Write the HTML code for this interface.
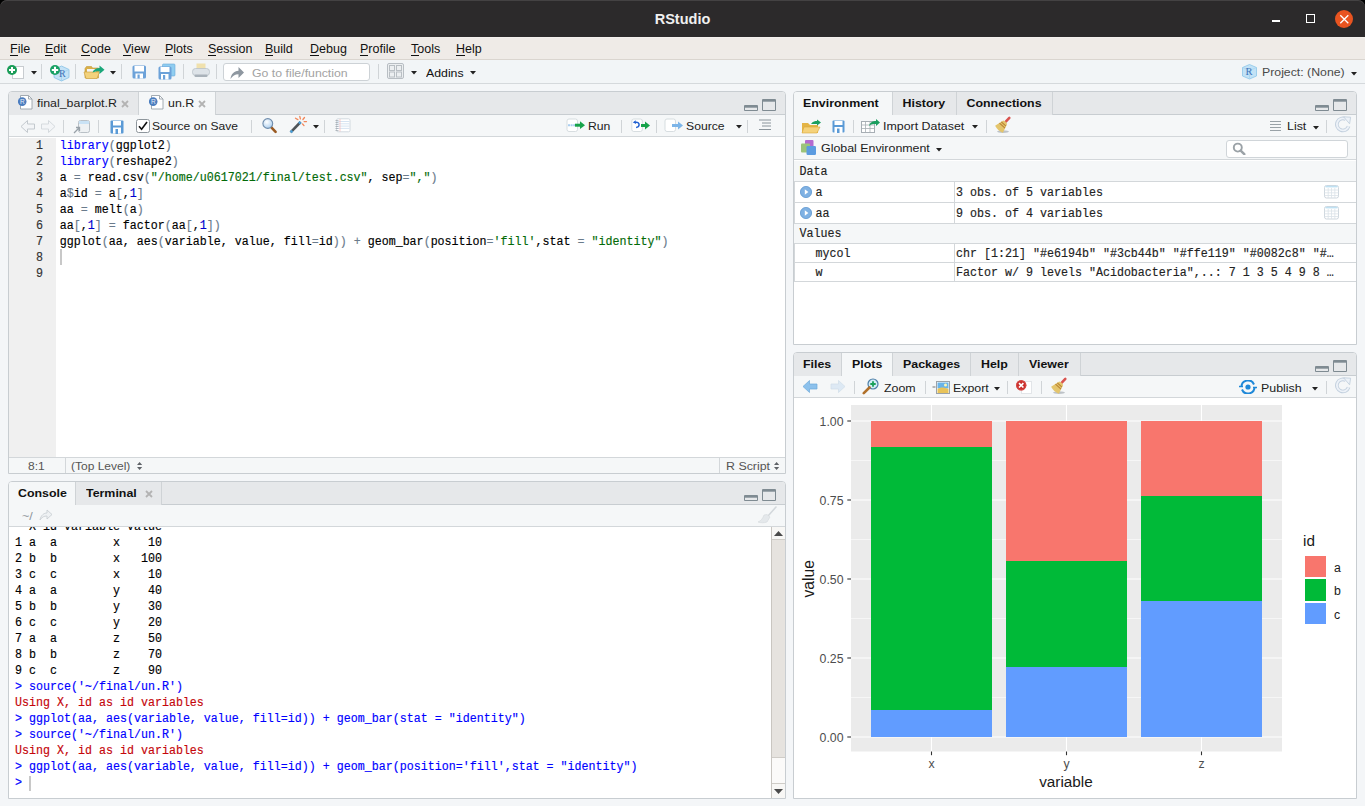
<!DOCTYPE html>
<html><head><meta charset="utf-8">
<style>
*{box-sizing:border-box;margin:0;padding:0}
html,body{width:1365px;height:806px;overflow:hidden;background:#f4f6f8}
body{font-family:"Liberation Sans",sans-serif;font-size:12px;color:#222;position:relative}
.a{position:absolute}
.t{white-space:pre;line-height:1}
.m{-webkit-text-stroke:0.15px currentColor;transform:scale(1,1.16);transform-origin:0 8.94px}
</style></head><body>
<div class="a" style="left:0px;top:0px;width:1365px;height:12px;background:#000;"></div>
<div class="a" style="left:0px;top:0px;width:1365px;height:37px;background:#2c2a2b;border-radius:7px 7px 0 0;box-shadow:inset 0 1px 0 #444243;"></div>
<div class="a t" style="left:0px;top:11.73px;font-family:'Liberation Sans',sans-serif;font-size:14.5px;color:#f0f0f0;font-weight:bold;width:1365px;text-align:center;">RStudio</div>
<div class="a" style="left:1272px;top:20px;width:8px;height:2px;background:#ffffff;"></div>
<div class="a" style="left:1306px;top:14px;width:9px;height:9px;border:1.5px solid #fff;"></div>
<div class="a" style="left:1334.6px;top:9.6px;width:18.6px;height:18.6px;background:#e95420;border-radius:50%;"></div>
<svg class="a" style="left:1334.6px;top:9.6px" width="19" height="19" viewBox="0 0 19 19"><path d="M5.3 5.3L13.3 13.3M13.3 5.3L5.3 13.3" stroke="#fff" stroke-width="1.3"/></svg>
<div class="a" style="left:0px;top:37px;width:1365px;height:23px;background:#efebe7;border-bottom:1px solid #dad5cf;"></div>
<div class="a" style="left:0px;top:37px;width:1365px;height:1px;background:#f3f0ed;"></div>
<div class="a t" style="left:10px;top:42.92px;font-family:'Liberation Sans',sans-serif;font-size:12.5px;color:#111;font-weight:normal;">File</div>
<div class="a" style="left:10px;top:55px;width:8px;height:1px;background:#111;"></div>
<div class="a t" style="left:45px;top:42.92px;font-family:'Liberation Sans',sans-serif;font-size:12.5px;color:#111;font-weight:normal;">Edit</div>
<div class="a" style="left:45px;top:55px;width:8px;height:1px;background:#111;"></div>
<div class="a t" style="left:81px;top:42.92px;font-family:'Liberation Sans',sans-serif;font-size:12.5px;color:#111;font-weight:normal;">Code</div>
<div class="a" style="left:81px;top:55px;width:9px;height:1px;background:#111;"></div>
<div class="a t" style="left:123px;top:42.92px;font-family:'Liberation Sans',sans-serif;font-size:12.5px;color:#111;font-weight:normal;">View</div>
<div class="a" style="left:123px;top:55px;width:8px;height:1px;background:#111;"></div>
<div class="a t" style="left:165px;top:42.92px;font-family:'Liberation Sans',sans-serif;font-size:12.5px;color:#111;font-weight:normal;">Plots</div>
<div class="a" style="left:165px;top:55px;width:8px;height:1px;background:#111;"></div>
<div class="a t" style="left:208px;top:42.92px;font-family:'Liberation Sans',sans-serif;font-size:12.5px;color:#111;font-weight:normal;">Session</div>
<div class="a" style="left:208px;top:55px;width:8px;height:1px;background:#111;"></div>
<div class="a t" style="left:265px;top:42.92px;font-family:'Liberation Sans',sans-serif;font-size:12.5px;color:#111;font-weight:normal;">Build</div>
<div class="a" style="left:265px;top:55px;width:8px;height:1px;background:#111;"></div>
<div class="a t" style="left:310px;top:42.92px;font-family:'Liberation Sans',sans-serif;font-size:12.5px;color:#111;font-weight:normal;">Debug</div>
<div class="a" style="left:310px;top:55px;width:9px;height:1px;background:#111;"></div>
<div class="a t" style="left:360px;top:42.92px;font-family:'Liberation Sans',sans-serif;font-size:12.5px;color:#111;font-weight:normal;">Profile</div>
<div class="a" style="left:360px;top:55px;width:8px;height:1px;background:#111;"></div>
<div class="a t" style="left:411px;top:42.92px;font-family:'Liberation Sans',sans-serif;font-size:12.5px;color:#111;font-weight:normal;">Tools</div>
<div class="a" style="left:411px;top:55px;width:8px;height:1px;background:#111;"></div>
<div class="a t" style="left:456px;top:42.92px;font-family:'Liberation Sans',sans-serif;font-size:12.5px;color:#111;font-weight:normal;">Help</div>
<div class="a" style="left:456px;top:55px;width:9px;height:1px;background:#111;"></div>
<div class="a" style="left:0px;top:60px;width:1365px;height:24px;background:#f2f5f7;border-bottom:1px solid #d5d9dc;"></div>
<svg class="a" style="left:6px;top:63px" width="24" height="17" viewBox="0 0 24 17"><rect x="6.5" y="3.5" width="11" height="12" fill="#fff" stroke="#c8ccd0"/><circle cx="6" cy="7" r="5" fill="#1a9d58"/><path d="M6 4v6M3 7h6" stroke="#fff" stroke-width="2"/></svg>
<svg class="a" style="left:31px;top:71px" width="6" height="4" viewBox="0 0 6 4"><path d="M0 0h6L3 3.5z" fill="#222"/></svg>
<div class="a" style="left:41px;top:64px;width:1px;height:15px;background:#d0d4d7;"></div>
<svg class="a" style="left:49px;top:63px" width="22" height="19" viewBox="0 0 22 19"><path d="M12.5 3l7.5 3.5v8L12.5 18 5 14.5v-8z" fill="#c4e2f6" stroke="#86c1e6" stroke-width="0.8"/><path d="M5 6.5l7.5 3.5 7.5-3.5M12.5 10v8" fill="none" stroke="#9fd0ee" stroke-width="0.7"/><text x="10" y="14" font-family="Liberation Serif" font-size="10" fill="#3f74b8">R</text><circle cx="6" cy="7" r="5" fill="#17a063"/><path d="M6 3.8v6.4M2.8 7h6.4" stroke="#fff" stroke-width="2.1"/></svg>
<div class="a" style="left:75px;top:64px;width:1px;height:15px;background:#d0d4d7;"></div>
<svg class="a" style="left:83px;top:63px" width="23" height="17" viewBox="0 0 23 17"><path d="M2 5.5l1.5-2h5l1 1.5h6v10H2z" fill="#d9b04a" stroke="#c39a35" stroke-width="0.6"/><path d="M4 6h9v6H4z" fill="#f4f4f4"/><path d="M1 9h15.5l-2.5 6.5H3z" fill="#f3d27c" stroke="#cfa443" stroke-width="0.7"/><path d="M9.5 9.5c1-3 3.5-4.5 7-4.5V2.5l5 4.2-5 4.2V8.3c-2.5 0-5 0.3-7 1.2z" fill="#1aa77a"/></svg>
<svg class="a" style="left:110px;top:71px" width="6" height="4" viewBox="0 0 6 4"><path d="M0 0h6L3 3.5z" fill="#222"/></svg>
<div class="a" style="left:121px;top:64px;width:1px;height:15px;background:#d0d4d7;"></div>
<svg class="a" style="left:132px;top:65px" width="15" height="14" viewBox="0 0 15 14"><rect x="0.5" y="0.5" width="13.5" height="13" rx="1.5" fill="#6ca2d9"/><rect x="2.5" y="1" width="9.5" height="5.5" fill="#fff"/><rect x="3.5" y="8.5" width="7.5" height="5" fill="#fff"/><rect x="5.5" y="9.5" width="2.2" height="4" fill="#6ca2d9"/></svg>
<svg class="a" style="left:158px;top:63px" width="18" height="17" viewBox="0 0 18 17"><rect x="4.5" y="1" width="12.5" height="12" rx="1" fill="#8fcdf0" stroke="#6aa8d8" stroke-width="0.6"/><rect x="0.5" y="3.5" width="13" height="13" rx="1.5" fill="#6ca2d9"/><rect x="2.5" y="4" width="9" height="5" fill="#fff"/><rect x="3" y="11" width="7.5" height="5.5" fill="#fff"/><rect x="5" y="12" width="2.2" height="4.5" fill="#6ca2d9"/></svg>
<div class="a" style="left:183px;top:64px;width:1px;height:15px;background:#d0d4d7;"></div>
<svg class="a" style="left:192px;top:63px" width="18" height="15" viewBox="0 0 18 15"><rect x="4.5" y="0.5" width="9" height="7" fill="#f0e1ad"/><rect x="0.5" y="5.5" width="17" height="7" rx="3" fill="#dde3e8" stroke="#b9c1c8" stroke-width="0.8"/><rect x="2.5" y="11.5" width="13" height="2.5" rx="1" fill="#a9b2ba"/></svg>
<div class="a" style="left:216px;top:64px;width:1px;height:15px;background:#d0d4d7;"></div>
<div class="a" style="left:223px;top:63px;width:147px;height:18px;background:#fff;border:1px solid #cdd2d6;border-radius:3px;"></div>
<svg class="a" style="left:229px;top:65px" width="16" height="15" viewBox="0 0 16 15"><path d="M1.5 14c0.5-5 3.5-8 8-8.3V2l5.5 5.5-5.5 5.5V9.2c-3.5 0-6 1.5-8 4.8z" fill="#8e97a0"/></svg>
<div class="a t" style="left:252px;top:67.09px;font-family:'Liberation Sans',sans-serif;font-size:12.3px;color:#a3a3a3;font-weight:normal;transform:scale(1,0.91);transform-origin:0 10.41px;">Go to file/function</div>
<div class="a" style="left:378px;top:64px;width:1px;height:15px;background:#d0d4d7;"></div>
<svg class="a" style="left:387px;top:63px" width="17" height="16" viewBox="0 0 17 16"><rect x="0.5" y="0.5" width="16" height="15" rx="1.5" fill="#eceff1" stroke="#b8bec3"/><rect x="2.5" y="2.5" width="5" height="5" fill="none" stroke="#b8bec3"/><rect x="9.5" y="2.5" width="5" height="5" fill="none" stroke="#b8bec3"/><rect x="2.5" y="9" width="5" height="5" fill="none" stroke="#b8bec3"/><rect x="9.5" y="9" width="5" height="5" fill="none" stroke="#b8bec3"/></svg>
<svg class="a" style="left:411px;top:71px" width="6" height="4" viewBox="0 0 6 4"><path d="M0 0h6L3 3.5z" fill="#222"/></svg>
<div class="a t" style="left:426px;top:66.59px;font-family:'Liberation Sans',sans-serif;font-size:12.3px;color:#111;font-weight:normal;transform:scale(1,0.91);transform-origin:0 10.41px;">Addins</div>
<svg class="a" style="left:470px;top:71px" width="6" height="4" viewBox="0 0 6 4"><path d="M0 0h6L3 3.5z" fill="#222"/></svg>
<svg class="a" style="left:1241px;top:63px" width="17" height="17" viewBox="0 0 17 17"><path d="M8.5 1.5l7 3v8.5l-7 3-7-3V4.5z" fill="#c2e2f6" stroke="#8cc6ea" stroke-width="0.8"/><path d="M1.5 4.5l7 3 7-3M8.5 7.5v8.5" fill="none" stroke="#a5d3ef" stroke-width="0.7"/><text x="4.6" y="11.8" font-family="Liberation Serif" font-size="10.5" fill="#3f74b8">R</text></svg>
<div class="a t" style="left:1262px;top:66.09px;font-family:'Liberation Sans',sans-serif;font-size:12.3px;color:#4a4a4a;font-weight:normal;transform:scale(1,0.91);transform-origin:0 10.41px;">Project: (None)</div>
<svg class="a" style="left:1351px;top:71.5px" width="6" height="4" viewBox="0 0 6 4"><path d="M0 0h6L3 3.5z" fill="#222"/></svg>
<div class="a" style="left:8px;top:91px;width:778px;height:383px;background:#ffffff;border:1px solid #c8cdd1;border-radius:4px 4px 0 0;"></div>
<div class="a" style="left:9px;top:92px;width:776px;height:23px;background:#e6e8ea;border-bottom:1px solid #c8cdd1;border-radius:3px 3px 0 0;"></div>
<div class="a" style="left:9px;top:92px;width:130px;height:23px;background:#e6e8ea;border-right:1px solid #cfd3d6;border-radius:3px 0 0 0;"></div>
<div class="a t" style="left:37px;top:97.0px;font-family:'Liberation Sans',sans-serif;font-size:12.4px;color:#222;font-weight:normal;transform:scale(1,0.91);transform-origin:0 10.50px;">final_barplot.R</div>
<svg class="a" style="left:121px;top:100px" width="8" height="8" viewBox="0 0 8 8"><path d="M1 1L7 7M7 1L1 7" stroke="#b3b3b3" stroke-width="1.8"/></svg>
<svg class="a" style="left:18px;top:94px" width="16" height="16" viewBox="0 0 16 16"><path d="M2.5 1.5h8l3.5 3.5v10h-11.5z" fill="#fff" stroke="#9aa3aa" stroke-width="0.9"/><path d="M10.5 1.5v3.5h3.5" fill="none" stroke="#9aa3aa" stroke-width="0.9"/><circle cx="4.2" cy="7.6" r="4.3" fill="#4b7dbf"/><text x="2" y="10.3" font-family="Liberation Sans" font-size="6.5" fill="#e8eef6">R</text></svg>
<div class="a" style="left:139px;top:92px;width:77px;height:24px;background:#f5f7f8;border-right:1px solid #cfd3d6;"></div>
<div class="a t" style="left:168px;top:97.0px;font-family:'Liberation Sans',sans-serif;font-size:12.4px;color:#222;font-weight:normal;transform:scale(1,0.91);transform-origin:0 10.50px;">un.R</div>
<svg class="a" style="left:198px;top:100px" width="8" height="8" viewBox="0 0 8 8"><path d="M1 1L7 7M7 1L1 7" stroke="#b3b3b3" stroke-width="1.8"/></svg>
<svg class="a" style="left:149px;top:94px" width="16" height="16" viewBox="0 0 16 16"><path d="M2.5 1.5h8l3.5 3.5v10h-11.5z" fill="#fff" stroke="#9aa3aa" stroke-width="0.9"/><path d="M10.5 1.5v3.5h3.5" fill="none" stroke="#9aa3aa" stroke-width="0.9"/><circle cx="4.2" cy="7.6" r="4.3" fill="#4b7dbf"/><text x="2" y="10.3" font-family="Liberation Sans" font-size="6.5" fill="#e8eef6">R</text></svg>
<svg class="a" style="left:744px;top:99px" width="32" height="12" viewBox="0 0 32 12"><rect x="0" y="6" width="14" height="6" rx="1" fill="#7f8b92"/><rect x="1" y="8.7" width="12" height="2.3" fill="#e6e8ea"/><rect x="18" y="0" width="14" height="12" rx="1" fill="#7f8b92"/><rect x="19" y="2.7" width="12" height="8.3" fill="#e6e8ea"/></svg>
<div class="a" style="left:9px;top:115px;width:776px;height:22px;background:#f5f7f8;border-bottom:1px solid #d3d7da;"></div>
<svg class="a" style="left:20px;top:119px" width="36" height="15" viewBox="0 0 36 15"><path d="M1 7.5L7.5 1.5v3.5h7v5h-7v3.5z" fill="#f3f5f7" stroke="#c3c9ce"/><path d="M35 7.5L28.5 1.5v3.5h-7v5h7v3.5z" fill="#f3f5f7" stroke="#d5dade"/></svg>
<div class="a" style="left:63px;top:120px;width:1px;height:13px;background:#d0d4d7;"></div>
<svg class="a" style="left:73px;top:119px" width="17" height="15" viewBox="0 0 17 15"><rect x="5.5" y="1.5" width="11" height="12" rx="2" fill="#eef1f3" stroke="#b9c0c6"/><rect x="6" y="2" width="10" height="3" fill="#c9e2f5"/><path d="M1 14l5-5M3 8.5h3.5V12" stroke="#98a1a8" stroke-width="1.3" fill="none"/></svg>
<div class="a" style="left:98px;top:120px;width:1px;height:13px;background:#d0d4d7;"></div>
<svg class="a" style="left:110px;top:120px" width="14" height="14" viewBox="0 0 14 14"><rect x="0.5" y="0.5" width="13" height="13" rx="1" fill="#5a9ad6"/><rect x="3" y="1" width="8" height="4.5" fill="#fff"/><rect x="3" y="7.5" width="8" height="6" fill="#fff"/><rect x="5.5" y="9" width="2.5" height="5" fill="#5a9ad6"/></svg>
<svg class="a" style="left:135px;top:117.5px" width="16" height="16" viewBox="0 0 16 16"><rect x="1.5" y="1.5" width="13" height="13" rx="2" fill="#fff" stroke="#8e969c"/><path d="M4 8.2l2.6 3L12 4" fill="none" stroke="#111" stroke-width="1.6"/></svg>
<div class="a t" style="left:152px;top:120.26px;font-family:'Liberation Sans',sans-serif;font-size:12.1px;color:#222;font-weight:normal;transform:scale(1,0.91);transform-origin:0 10.24px;">Source on Save</div>
<div class="a" style="left:251px;top:120px;width:1px;height:13px;background:#d0d4d7;"></div>
<svg class="a" style="left:261px;top:117px" width="17" height="17" viewBox="0 0 17 17"><defs><radialGradient id="mg" cx="0.4" cy="0.35" r="0.7"><stop offset="0" stop-color="#ffffff"/><stop offset="1" stop-color="#a9cdee"/></radialGradient></defs><path d="M9.6 9.6L14.6 14.8" stroke="#9a5a22" stroke-width="2.6" stroke-linecap="round"/><circle cx="6.8" cy="6.5" r="4.9" fill="url(#mg)" stroke="#6f8cab" stroke-width="1.1"/></svg>
<svg class="a" style="left:288px;top:115px" width="24" height="20" viewBox="0 0 24 20"><path d="M2.6 17.4L12.6 7" stroke="#4f5458" stroke-width="2.6" stroke-linecap="butt"/><path d="M2.6 17.4L4.3 15.6M11 8.7L12.6 7" stroke="#4d9fd6" stroke-width="2.6"/><path d="M11.8 1.5l0.6 2.3M7.5 3.2l2.4 1.4M16.5 2.5l-1.6 2M18.5 6.6h-2.4M16 10.6l-1.4-1.6" stroke="#f2875a" stroke-width="1.3" stroke-linecap="round"/></svg>
<svg class="a" style="left:313px;top:125px" width="6" height="4" viewBox="0 0 6 4"><path d="M0 0h6L3 3.5z" fill="#222"/></svg>
<div class="a" style="left:324px;top:120px;width:1px;height:13px;background:#d0d4d7;"></div>
<svg class="a" style="left:335px;top:118px" width="16" height="15" viewBox="0 0 16 15"><rect x="1.5" y="0.8" width="13.5" height="13" rx="1.5" fill="#fff" stroke="#cfd6dc" stroke-width="0.9"/><path d="M2 3.5h12.5M2 5.8h12.5M2 8.1h12.5M2 10.4h12.5" stroke="#d6e4f2" stroke-width="1"/><path d="M5 1v12.5" stroke="#f3b7b7" stroke-width="0.7"/><path d="M0.5 2.5h3M0.5 4.5h3M0.5 6.5h3M0.5 8.5h3M0.5 10.5h3M0.5 12.5h3" stroke="#9aa2a9" stroke-width="0.7"/></svg>
<svg class="a" style="left:566px;top:118px" width="21" height="15" viewBox="0 0 21 15"><rect x="1" y="1" width="10.5" height="12.5" rx="2" fill="#fff" stroke="#d3d9dd" stroke-width="0.9"/><path d="M2 7.2h7" stroke="#a9cdef" stroke-width="2" stroke-dasharray="2 0.6"/><path d="M9 7.2h6" stroke="#17a34a" stroke-width="3"/><path d="M14 3.3L19 7.2 14 11.1z" fill="#17a34a"/></svg>
<div class="a t" style="left:588px;top:119.67px;font-family:'Liberation Sans',sans-serif;font-size:12.2px;color:#222;font-weight:normal;transform:scale(1,0.91);transform-origin:0 10.33px;">Run</div>
<div class="a" style="left:621px;top:120px;width:1px;height:13px;background:#d0d4d7;"></div>
<svg class="a" style="left:631px;top:118px" width="20" height="15" viewBox="0 0 20 15"><rect x="0.8" y="1" width="10.5" height="12.5" rx="2" fill="#fff" stroke="#d3d9dd" stroke-width="0.9"/><path d="M3.8 4.8c2.5-1.2 4.5 0 4.3 2.2-0.2 1.6-1.6 2.4-3 2.4" fill="none" stroke="#1f5fd0" stroke-width="1.5"/><path d="M1.8 4.6l2.8-2.4 0.4 3.6z" fill="#1f5fd0"/><path d="M10 7.5h5" stroke="#17a34a" stroke-width="3"/><path d="M14 3.6L19 7.5 14 11.4z" fill="#17a34a"/></svg>
<div class="a" style="left:656px;top:120px;width:1px;height:13px;background:#d0d4d7;"></div>
<svg class="a" style="left:664px;top:118px" width="21" height="15" viewBox="0 0 21 15"><rect x="1" y="1" width="10.5" height="12.5" rx="2" fill="#fff" stroke="#d3d9dd" stroke-width="0.9"/><path d="M8 7.5h7" stroke="#7db5e8" stroke-width="3"/><path d="M14 3.6L19 7.5 14 11.4z" fill="#7db5e8"/></svg>
<div class="a t" style="left:686px;top:119.67px;font-family:'Liberation Sans',sans-serif;font-size:12.2px;color:#222;font-weight:normal;transform:scale(1,0.91);transform-origin:0 10.33px;">Source</div>
<svg class="a" style="left:736px;top:125px" width="6" height="4" viewBox="0 0 6 4"><path d="M0 0h6L3 3.5z" fill="#222"/></svg>
<div class="a" style="left:747px;top:120px;width:1px;height:13px;background:#d0d4d7;"></div>
<svg class="a" style="left:759px;top:119px" width="13" height="12" viewBox="0 0 13 12"><path d="M0 1h12M3 4h9M3 7h9M0 10.5h12" stroke="#8a949b" stroke-width="1"/></svg>
<div class="a" style="left:9px;top:138px;width:47px;height:319px;background:#f0f0f0;"></div>
<div class="a t m" style="left:36px;top:141.06px;font-family:'Liberation Mono',monospace;font-size:11.667px;color:#333;font-weight:normal;">1</div>
<div class="a t m" style="left:59.8px;top:141.06px;font-family:'Liberation Mono',monospace;font-size:11.667px;color:#000;font-weight:normal;"><span style="color:#0000ff">library</span><span style="color:#6a7b8c">(</span>ggplot2<span style="color:#6a7b8c">)</span></div>
<div class="a t m" style="left:36px;top:157.06px;font-family:'Liberation Mono',monospace;font-size:11.667px;color:#333;font-weight:normal;">2</div>
<div class="a t m" style="left:59.8px;top:157.06px;font-family:'Liberation Mono',monospace;font-size:11.667px;color:#000;font-weight:normal;"><span style="color:#0000ff">library</span><span style="color:#6a7b8c">(</span>reshape2<span style="color:#6a7b8c">)</span></div>
<div class="a t m" style="left:36px;top:173.06px;font-family:'Liberation Mono',monospace;font-size:11.667px;color:#333;font-weight:normal;">3</div>
<div class="a t m" style="left:59.8px;top:173.06px;font-family:'Liberation Mono',monospace;font-size:11.667px;color:#000;font-weight:normal;">a <span style="color:#6a7b8c">=</span> read.csv<span style="color:#6a7b8c">(</span><span style="color:#036a07">"/home/u0617021/final/test.csv"</span>, sep<span style="color:#6a7b8c">=</span><span style="color:#036a07">","</span><span style="color:#6a7b8c">)</span></div>
<div class="a t m" style="left:36px;top:189.06px;font-family:'Liberation Mono',monospace;font-size:11.667px;color:#333;font-weight:normal;">4</div>
<div class="a t m" style="left:59.8px;top:189.06px;font-family:'Liberation Mono',monospace;font-size:11.667px;color:#000;font-weight:normal;">a<span style="color:#6a7b8c">$</span>id <span style="color:#6a7b8c">=</span> a<span style="color:#6a7b8c">[</span>,<span style="color:#0000cd">1</span><span style="color:#6a7b8c">]</span></div>
<div class="a t m" style="left:36px;top:205.06px;font-family:'Liberation Mono',monospace;font-size:11.667px;color:#333;font-weight:normal;">5</div>
<div class="a t m" style="left:59.8px;top:205.06px;font-family:'Liberation Mono',monospace;font-size:11.667px;color:#000;font-weight:normal;">aa <span style="color:#6a7b8c">=</span> melt<span style="color:#6a7b8c">(</span>a<span style="color:#6a7b8c">)</span></div>
<div class="a t m" style="left:36px;top:221.06px;font-family:'Liberation Mono',monospace;font-size:11.667px;color:#333;font-weight:normal;">6</div>
<div class="a t m" style="left:59.8px;top:221.06px;font-family:'Liberation Mono',monospace;font-size:11.667px;color:#000;font-weight:normal;">aa<span style="color:#6a7b8c">[</span>,<span style="color:#0000cd">1</span><span style="color:#6a7b8c">]</span> <span style="color:#6a7b8c">=</span> factor<span style="color:#6a7b8c">(</span>aa<span style="color:#6a7b8c">[</span>,<span style="color:#0000cd">1</span><span style="color:#6a7b8c">])</span></div>
<div class="a t m" style="left:36px;top:237.06px;font-family:'Liberation Mono',monospace;font-size:11.667px;color:#333;font-weight:normal;">7</div>
<div class="a t m" style="left:59.8px;top:237.06px;font-family:'Liberation Mono',monospace;font-size:11.667px;color:#000;font-weight:normal;">ggplot<span style="color:#6a7b8c">(</span>aa, aes<span style="color:#6a7b8c">(</span>variable, value, fill<span style="color:#6a7b8c">=</span>id<span style="color:#6a7b8c">))</span> <span style="color:#6a7b8c">+</span> geom_bar<span style="color:#6a7b8c">(</span>position<span style="color:#6a7b8c">=</span><span style="color:#036a07">'fill'</span>,stat <span style="color:#6a7b8c">=</span> <span style="color:#036a07">"identity"</span><span style="color:#6a7b8c">)</span></div>
<div class="a t m" style="left:36px;top:253.06px;font-family:'Liberation Mono',monospace;font-size:11.667px;color:#333;font-weight:normal;">8</div>
<div class="a t m" style="left:36px;top:269.06px;font-family:'Liberation Mono',monospace;font-size:11.667px;color:#333;font-weight:normal;">9</div>
<div class="a" style="left:60px;top:249px;width:2px;height:16px;background:#c8c8c8;"></div>
<div class="a" style="left:9px;top:457px;width:776px;height:16px;background:#f5f7f8;border-top:1px solid #d3d7da;"></div>
<div class="a" style="left:65px;top:458px;width:1px;height:15px;background:#d3d7da;"></div>
<div class="a t" style="left:28px;top:460.34px;font-family:'Liberation Sans',sans-serif;font-size:12px;color:#555;font-weight:normal;transform:scale(1,0.91);transform-origin:0 10.16px;">8:1</div>
<div class="a t" style="left:71px;top:460.34px;font-family:'Liberation Sans',sans-serif;font-size:12px;color:#555;font-weight:normal;transform:scale(1,0.91);transform-origin:0 10.16px;">(Top Level)</div>
<svg class="a" style="left:137px;top:461px" width="6" height="10" viewBox="0 0 6 10"><path d="M0 4L2.6 1 5.2 4zM0 6L2.6 9 5.2 6z" fill="#5f6368"/></svg>
<div class="a" style="left:719px;top:458px;width:1px;height:15px;background:#d3d7da;"></div>
<div class="a t" style="left:726px;top:460.0px;font-family:'Liberation Sans',sans-serif;font-size:12.4px;color:#555;font-weight:normal;transform:scale(1,0.91);transform-origin:0 10.50px;">R Script</div>
<svg class="a" style="left:774px;top:461px" width="6" height="10" viewBox="0 0 6 10"><path d="M0 4L2.6 1 5.2 4zM0 6L2.6 9 5.2 6z" fill="#5f6368"/></svg>
<div class="a" style="left:8px;top:481px;width:778px;height:318px;background:#ffffff;border:1px solid #c8cdd1;border-radius:4px 4px 0 0;"></div>
<div class="a" style="left:9px;top:482px;width:776px;height:23px;background:#e6e8ea;border-bottom:1px solid #c8cdd1;border-radius:3px 3px 0 0;"></div>
<div class="a" style="left:9px;top:482px;width:67px;height:24px;background:#f5f7f8;border-right:1px solid #cfd3d6;border-radius:3px 0 0 0;"></div>
<div class="a t" style="left:18px;top:486.5px;font-family:'Liberation Sans',sans-serif;font-size:12.4px;color:#111;font-weight:bold;transform:scale(1,0.91);transform-origin:0 10.50px;">Console</div>
<div class="a" style="left:76px;top:482px;width:86px;height:23px;background:#e6e8ea;border-right:1px solid #cfd3d6;"></div>
<div class="a t" style="left:86px;top:486.5px;font-family:'Liberation Sans',sans-serif;font-size:12.4px;color:#111;font-weight:bold;transform:scale(1,0.91);transform-origin:0 10.50px;">Terminal</div>
<svg class="a" style="left:145px;top:490px" width="8" height="8" viewBox="0 0 8 8"><path d="M1 1L7 7M7 1L1 7" stroke="#b3b3b3" stroke-width="1.8"/></svg>
<svg class="a" style="left:744px;top:489px" width="32" height="12" viewBox="0 0 32 12"><rect x="0" y="6" width="14" height="6" rx="1" fill="#7f8b92"/><rect x="1" y="8.7" width="12" height="2.3" fill="#e6e8ea"/><rect x="18" y="0" width="14" height="12" rx="1" fill="#7f8b92"/><rect x="19" y="2.7" width="12" height="8.3" fill="#e6e8ea"/></svg>
<div class="a" style="left:9px;top:505px;width:776px;height:22px;background:#f5f7f8;border-bottom:1px solid #d3d7da;"></div>
<div class="a t" style="left:22px;top:510.42px;font-family:'Liberation Sans',sans-serif;font-size:12.5px;color:#8d949a;font-weight:normal;transform:scale(1,0.91);transform-origin:0 10.58px;">~/</div>
<svg class="a" style="left:39px;top:509px" width="14" height="12" viewBox="0 0 14 12"><path d="M1 11c1-5 4-7 7-7V1l5 4.5-5 4.5V7c-3 0-5 1-7 4z" fill="#eef1f3" stroke="#c9cfd4" stroke-width="0.9"/></svg>
<svg class="a" style="left:757px;top:506px" width="21" height="18" viewBox="0 0 21 18"><path d="M19 1L11 10" stroke="#d3d8dc" stroke-width="1.6" stroke-linecap="round"/><path d="M10 8.5l3 2.5-3 5c-3 1-6 1-9 0 3-1 5-4 6-7z" fill="#e4e8eb" stroke="#d3d8dc" stroke-width="0.6"/></svg>
<div class="a" style="left:9px;top:527px;width:762px;height:271px;background:#ffffff;"></div>
<div class="a" style="left:9px;top:527px;width:762px;height:271px;overflow:hidden">
<div class="a t m" style="left:6px;top:-4.94px;font-family:'Liberation Mono',monospace;font-size:11.667px;color:#000;font-weight:normal;">  X id variable value</div>
<div class="a t m" style="left:6px;top:11.06px;font-family:'Liberation Mono',monospace;font-size:11.667px;color:#000;font-weight:normal;">1 a  a        x    10</div>
<div class="a t m" style="left:6px;top:27.06px;font-family:'Liberation Mono',monospace;font-size:11.667px;color:#000;font-weight:normal;">2 b  b        x   100</div>
<div class="a t m" style="left:6px;top:43.06px;font-family:'Liberation Mono',monospace;font-size:11.667px;color:#000;font-weight:normal;">3 c  c        x    10</div>
<div class="a t m" style="left:6px;top:59.06px;font-family:'Liberation Mono',monospace;font-size:11.667px;color:#000;font-weight:normal;">4 a  a        y    40</div>
<div class="a t m" style="left:6px;top:75.06px;font-family:'Liberation Mono',monospace;font-size:11.667px;color:#000;font-weight:normal;">5 b  b        y    30</div>
<div class="a t m" style="left:6px;top:91.06px;font-family:'Liberation Mono',monospace;font-size:11.667px;color:#000;font-weight:normal;">6 c  c        y    20</div>
<div class="a t m" style="left:6px;top:107.06px;font-family:'Liberation Mono',monospace;font-size:11.667px;color:#000;font-weight:normal;">7 a  a        z    50</div>
<div class="a t m" style="left:6px;top:123.06px;font-family:'Liberation Mono',monospace;font-size:11.667px;color:#000;font-weight:normal;">8 b  b        z    70</div>
<div class="a t m" style="left:6px;top:139.06px;font-family:'Liberation Mono',monospace;font-size:11.667px;color:#000;font-weight:normal;">9 c  c        z    90</div>
<div class="a t m" style="left:6px;top:155.06px;font-family:'Liberation Mono',monospace;font-size:11.667px;color:#0000ff;font-weight:normal;">&gt; source(&#x27;~/final/un.R&#x27;)</div>
<div class="a t m" style="left:6px;top:171.06px;font-family:'Liberation Mono',monospace;font-size:11.667px;color:#c5060b;font-weight:normal;">Using X, id as id variables</div>
<div class="a t m" style="left:6px;top:187.06px;font-family:'Liberation Mono',monospace;font-size:11.667px;color:#0000ff;font-weight:normal;">&gt; ggplot(aa, aes(variable, value, fill=id)) + geom_bar(stat = &quot;identity&quot;)</div>
<div class="a t m" style="left:6px;top:203.06px;font-family:'Liberation Mono',monospace;font-size:11.667px;color:#0000ff;font-weight:normal;">&gt; source(&#x27;~/final/un.R&#x27;)</div>
<div class="a t m" style="left:6px;top:219.06px;font-family:'Liberation Mono',monospace;font-size:11.667px;color:#c5060b;font-weight:normal;">Using X, id as id variables</div>
<div class="a t m" style="left:6px;top:235.06px;font-family:'Liberation Mono',monospace;font-size:11.667px;color:#0000ff;font-weight:normal;">&gt; ggplot(aa, aes(variable, value, fill=id)) + geom_bar(position=&#x27;fill&#x27;,stat = &quot;identity&quot;)</div>
<div class="a t m" style="left:6px;top:251.06px;font-family:'Liberation Mono',monospace;font-size:11.667px;color:#0000ff;font-weight:normal;">&gt; </div>
</div>
<div class="a" style="left:29px;top:776px;width:2px;height:15px;background:#c8c8c8;"></div>
<div class="a" style="left:771px;top:527px;width:14px;height:271px;background:#e6e3df;border-left:1px solid #c9c6c1;"></div>
<div class="a" style="left:772px;top:527px;width:13px;height:13px;background:#f8f7f5;border-bottom:1px solid #cfccc7;"></div>
<svg class="a" style="left:774px;top:531px" width="9" height="5" viewBox="0 0 9 5"><path d="M0 5L4.5 0 9 5z" fill="#4a4a4a"/></svg>
<div class="a" style="left:772px;top:757px;width:13px;height:27px;background:#fbfaf9;border-top:1px solid #cfccc7;border-bottom:1px solid #cfccc7;"></div>
<div class="a" style="left:772px;top:784px;width:13px;height:14px;background:#f8f7f5;"></div>
<svg class="a" style="left:774px;top:789px" width="9" height="5" viewBox="0 0 9 5"><path d="M0 0h9L4.5 5z" fill="#4a4a4a"/></svg>
<div class="a" style="left:793px;top:91px;width:564px;height:254px;background:#ffffff;border:1px solid #c8cdd1;border-radius:4px 4px 0 0;"></div>
<div class="a" style="left:794px;top:92px;width:562px;height:23px;background:#e6e8ea;border-bottom:1px solid #c8cdd1;border-radius:3px 3px 0 0;"></div>
<div class="a" style="left:794px;top:92px;width:99px;height:24px;background:#f5f7f8;border-right:1px solid #cfd3d6;border-radius:3px 0 0 0;"></div>
<div class="a t" style="left:803px;top:96.5px;font-family:'Liberation Sans',sans-serif;font-size:12.4px;color:#111;font-weight:bold;transform:scale(1,0.91);transform-origin:0 10.50px;">Environment</div>
<div class="a" style="left:893px;top:92px;width:64px;height:23px;background:#e6e8ea;border-right:1px solid #cfd3d6;"></div>
<div class="a t" style="left:902.5px;top:96.5px;font-family:'Liberation Sans',sans-serif;font-size:12.4px;color:#111;font-weight:bold;transform:scale(1,0.91);transform-origin:0 10.50px;">History</div>
<div class="a" style="left:957px;top:92px;width:96px;height:23px;background:#e6e8ea;border-right:1px solid #cfd3d6;"></div>
<div class="a t" style="left:966.5px;top:96.5px;font-family:'Liberation Sans',sans-serif;font-size:12.4px;color:#111;font-weight:bold;transform:scale(1,0.91);transform-origin:0 10.50px;">Connections</div>
<svg class="a" style="left:1315px;top:99px" width="32" height="12" viewBox="0 0 32 12"><rect x="0" y="6" width="14" height="6" rx="1" fill="#7f8b92"/><rect x="1" y="8.7" width="12" height="2.3" fill="#e6e8ea"/><rect x="18" y="0" width="14" height="12" rx="1" fill="#7f8b92"/><rect x="19" y="2.7" width="12" height="8.3" fill="#e6e8ea"/></svg>
<div class="a" style="left:794px;top:115px;width:562px;height:22px;background:#f5f7f8;border-bottom:1px solid #d3d7da;"></div>
<svg class="a" style="left:801px;top:119px" width="21" height="15" viewBox="0 0 21 15"><path d="M1 4h6l2 2h8v8H1z" fill="#e4b446"/><path d="M3 8h16l-3 6H1z" fill="#f5d27a" stroke="#d9a83a" stroke-width="0.6"/><path d="M10 5c2-3 4-3 6-3V0.5l4 3-4 3V5c-2 0-4 0-6 0z" fill="#1b9e5f"/></svg>
<svg class="a" style="left:832px;top:120px" width="13" height="13" viewBox="0 0 13 13"><rect x="0.5" y="0.5" width="12" height="12" rx="1" fill="#5a9ad6"/><rect x="2.5" y="1" width="8" height="4" fill="#fff"/><rect x="2.5" y="7" width="8" height="6" fill="#fff"/><rect x="5" y="8.5" width="2.5" height="4.5" fill="#5a9ad6"/></svg>
<div class="a" style="left:853px;top:120px;width:1px;height:13px;background:#d0d4d7;"></div>
<svg class="a" style="left:861px;top:119px" width="20" height="14" viewBox="0 0 20 14"><rect x="0.5" y="2.5" width="13" height="11" fill="#fff" stroke="#a7aeb4"/><path d="M0.5 6h13M0.5 9.5h13M4.5 2.5v11M9 2.5v11" stroke="#a7aeb4" stroke-width="0.8"/><path d="M8 7c1-4 4-5 7-5V0l4 3.5-4 3.5V5c-3 0-5 0-7 2z" fill="#1b9e5f"/></svg>
<div class="a t" style="left:883px;top:119.5px;font-family:'Liberation Sans',sans-serif;font-size:12.4px;color:#222;font-weight:normal;transform:scale(1,0.91);transform-origin:0 10.50px;">Import Dataset</div>
<svg class="a" style="left:972px;top:125px" width="6" height="4" viewBox="0 0 6 4"><path d="M0 0h6L3 3.5z" fill="#222"/></svg>
<div class="a" style="left:986px;top:120px;width:1px;height:13px;background:#d0d4d7;"></div>
<svg class="a" style="left:990px;top:114px" width="30" height="24" viewBox="0 0 30 24"><ellipse cx="13" cy="17.6" rx="6" ry="1.3" fill="#8e979f" opacity="0.55"/><path d="M15.8 7.6L19.3 3.9" stroke="#d9534f" stroke-width="2.6" stroke-linecap="round"/><g transform="translate(15.2,8.3) rotate(42)"><path d="M-2.6 0Q0 -1.6 2.6 0L5.2 9.3Q0 11.2 -5.2 9.3Z" fill="#e4c56c"/><path d="M-3.2 2.3H3.2M-3.7 4.4H3.7" stroke="#b98332" stroke-width="1.1"/></g></svg>
<svg class="a" style="left:1270px;top:120px" width="12" height="12" viewBox="0 0 12 12"><path d="M0 1.5h11M0 4.5h11M0 7.5h11M0 10.5h11" stroke="#8f979d" stroke-width="0.9"/></svg>
<div class="a t" style="left:1287px;top:119.5px;font-family:'Liberation Sans',sans-serif;font-size:12.4px;color:#222;font-weight:normal;transform:scale(1,0.91);transform-origin:0 10.50px;">List</div>
<svg class="a" style="left:1313px;top:125.5px" width="6" height="4" viewBox="0 0 6 4"><path d="M0 0h6L3 3.5z" fill="#222"/></svg>
<div class="a" style="left:1326px;top:120px;width:1px;height:13px;background:#d0d4d7;"></div>
<svg class="a" style="left:1334.5px;top:116px" width="17" height="17" viewBox="0 0 17 17"><path d="M13.6 10.2A6 6 0 1 1 10.8 3.2" fill="none" stroke="#c3d0de" stroke-width="3.6"/><path d="M13.6 10.2A6 6 0 1 1 10.8 3.2" fill="none" stroke="#edf2f8" stroke-width="1.8"/><path d="M8.6 0.8L15.6 1.2L14.6 7.8Z" fill="#edf2f8" stroke="#c3d0de" stroke-width="0.9" stroke-linejoin="round"/></svg>
<div class="a" style="left:794px;top:137px;width:562px;height:23px;background:#f5f7f8;border-bottom:1px solid #d3d7da;"></div>
<svg class="a" style="left:801px;top:140px" width="16" height="15" viewBox="0 0 16 15"><rect x="4" y="0" width="8.5" height="8.5" rx="1" fill="#b36ad0"/><rect x="0" y="3.5" width="9" height="9" rx="1" fill="#9cc47a"/><rect x="5.5" y="6" width="9.5" height="9" rx="1.2" fill="#5b9be0"/></svg>
<div class="a t" style="left:821px;top:141.5px;font-family:'Liberation Sans',sans-serif;font-size:12.4px;color:#222;font-weight:normal;transform:scale(1,0.91);transform-origin:0 10.50px;">Global Environment</div>
<svg class="a" style="left:936px;top:148px" width="6" height="4" viewBox="0 0 6 4"><path d="M0 0h6L3 3.5z" fill="#222"/></svg>
<div class="a" style="left:1226px;top:140px;width:122px;height:18px;background:#fff;border:1px solid #d0d5d9;border-radius:3px;"></div>
<svg class="a" style="left:1232px;top:142px" width="14" height="13" viewBox="0 0 14 13"><circle cx="5.8" cy="5.6" r="4" fill="none" stroke="#9ba2a7" stroke-width="1.9"/><path d="M8.7 8.6l3.6 3.6" stroke="#9ba2a7" stroke-width="2.4" stroke-linecap="round"/></svg>
<div class="a" style="left:794px;top:161px;width:562px;height:21px;background:#f5f7f8;border-bottom:1px solid #d3d7da;"></div>
<div class="a t m" style="left:799.5px;top:167.16px;font-family:'Liberation Mono',monospace;font-size:11.667px;color:#222;font-weight:normal;">Data</div>
<div class="a" style="left:794px;top:182px;width:562px;height:21px;background:#fff;border-bottom:1px solid #d3d7da;border-left:1px solid #d3d7da;"></div>
<div class="a" style="left:954px;top:182px;width:1px;height:20px;background:#d3d7da;"></div>
<svg class="a" style="left:800px;top:185.5px" width="13" height="13" viewBox="0 0 13 13"><circle cx="6" cy="6" r="5.8" fill="#7fb1e3"/><circle cx="6" cy="6" r="5.6" fill="none" stroke="#5d97cf" stroke-width="0.7"/><path d="M4.8 3.2l3.6 2.8-3.6 2.8z" fill="#fff"/></svg>
<div class="a t m" style="left:815.5px;top:188.36px;font-family:'Liberation Mono',monospace;font-size:11.667px;color:#222;font-weight:normal;">a</div>
<div class="a t m" style="left:956px;top:188.36px;font-family:'Liberation Mono',monospace;font-size:11.667px;color:#222;font-weight:normal;">3 obs. of 5 variables</div>
<svg class="a" style="left:1324px;top:185px" width="15" height="14" viewBox="0 0 15 14"><rect x="0.5" y="0.5" width="14" height="12.5" rx="2" fill="#fff" stroke="#c9d2da" stroke-width="0.9"/><path d="M1.5 1.6h12" stroke="#bfe1f3" stroke-width="1.6"/><path d="M0.5 5h14M0.5 7.8h14M0.5 10.5h14M4.2 3v10M7.5 3v10M10.8 3v10" stroke="#dbe2e8" stroke-width="0.8"/></svg>
<div class="a" style="left:794px;top:203px;width:562px;height:21px;background:#fff;border-bottom:1px solid #d3d7da;border-left:1px solid #d3d7da;"></div>
<div class="a" style="left:954px;top:203px;width:1px;height:20px;background:#d3d7da;"></div>
<svg class="a" style="left:800px;top:206.5px" width="13" height="13" viewBox="0 0 13 13"><circle cx="6" cy="6" r="5.8" fill="#7fb1e3"/><circle cx="6" cy="6" r="5.6" fill="none" stroke="#5d97cf" stroke-width="0.7"/><path d="M4.8 3.2l3.6 2.8-3.6 2.8z" fill="#fff"/></svg>
<div class="a t m" style="left:815.5px;top:209.26px;font-family:'Liberation Mono',monospace;font-size:11.667px;color:#222;font-weight:normal;">aa</div>
<div class="a t m" style="left:956px;top:209.26px;font-family:'Liberation Mono',monospace;font-size:11.667px;color:#222;font-weight:normal;">9 obs. of 4 variables</div>
<svg class="a" style="left:1324px;top:206px" width="15" height="14" viewBox="0 0 15 14"><rect x="0.5" y="0.5" width="14" height="12.5" rx="2" fill="#fff" stroke="#c9d2da" stroke-width="0.9"/><path d="M1.5 1.6h12" stroke="#bfe1f3" stroke-width="1.6"/><path d="M0.5 5h14M0.5 7.8h14M0.5 10.5h14M4.2 3v10M7.5 3v10M10.8 3v10" stroke="#dbe2e8" stroke-width="0.8"/></svg>
<div class="a" style="left:794px;top:224px;width:562px;height:20px;background:#f5f7f8;border-bottom:1px solid #d3d7da;"></div>
<div class="a t m" style="left:799.5px;top:229.26px;font-family:'Liberation Mono',monospace;font-size:11.667px;color:#222;font-weight:normal;">Values</div>
<div class="a" style="left:794px;top:244px;width:562px;height:19px;background:#fff;border-bottom:1px solid #d3d7da;border-left:1px solid #d3d7da;"></div>
<div class="a" style="left:954px;top:244px;width:1px;height:18px;background:#d3d7da;"></div>
<div class="a t m" style="left:815.5px;top:249.16px;font-family:'Liberation Mono',monospace;font-size:11.667px;color:#222;font-weight:normal;">mycol</div>
<div class="a t m" style="left:956px;top:249.16px;font-family:'Liberation Mono',monospace;font-size:11.667px;color:#222;font-weight:normal;">chr [1:21] &quot;#e6194b&quot; &quot;#3cb44b&quot; &quot;#ffe119&quot; &quot;#0082c8&quot; &quot;#…</div>
<div class="a" style="left:794px;top:263px;width:562px;height:19px;background:#fff;border-bottom:1px solid #d3d7da;border-left:1px solid #d3d7da;"></div>
<div class="a" style="left:954px;top:263px;width:1px;height:18px;background:#d3d7da;"></div>
<div class="a t m" style="left:815.5px;top:268.36px;font-family:'Liberation Mono',monospace;font-size:11.667px;color:#222;font-weight:normal;">w</div>
<div class="a t m" style="left:956px;top:268.36px;font-family:'Liberation Mono',monospace;font-size:11.667px;color:#222;font-weight:normal;">Factor w/ 9 levels &quot;Acidobacteria&quot;,..: 7 1 3 5 4 9 8 …</div>
<div class="a" style="left:793px;top:352px;width:564px;height:447px;background:#ffffff;border:1px solid #c8cdd1;border-radius:4px 4px 0 0;"></div>
<div class="a" style="left:794px;top:353px;width:562px;height:23px;background:#e6e8ea;border-bottom:1px solid #c8cdd1;border-radius:3px 3px 0 0;"></div>
<div class="a" style="left:794px;top:353px;width:48px;height:23px;background:#e6e8ea;border-right:1px solid #cfd3d6;border-radius:3px 0 0 0;"></div>
<div class="a t" style="left:803px;top:357.5px;font-family:'Liberation Sans',sans-serif;font-size:12.4px;color:#111;font-weight:bold;transform:scale(1,0.91);transform-origin:0 10.50px;">Files</div>
<div class="a" style="left:842px;top:353px;width:51px;height:24px;background:#f5f7f8;border-right:1px solid #cfd3d6;"></div>
<div class="a t" style="left:852px;top:357.5px;font-family:'Liberation Sans',sans-serif;font-size:12.4px;color:#111;font-weight:bold;transform:scale(1,0.91);transform-origin:0 10.50px;">Plots</div>
<div class="a" style="left:893px;top:353px;width:78px;height:23px;background:#e6e8ea;border-right:1px solid #cfd3d6;"></div>
<div class="a t" style="left:903px;top:357.5px;font-family:'Liberation Sans',sans-serif;font-size:12.4px;color:#111;font-weight:bold;transform:scale(1,0.91);transform-origin:0 10.50px;">Packages</div>
<div class="a" style="left:971px;top:353px;width:48px;height:23px;background:#e6e8ea;border-right:1px solid #cfd3d6;"></div>
<div class="a t" style="left:981px;top:357.5px;font-family:'Liberation Sans',sans-serif;font-size:12.4px;color:#111;font-weight:bold;transform:scale(1,0.91);transform-origin:0 10.50px;">Help</div>
<div class="a" style="left:1019px;top:353px;width:62px;height:23px;background:#e6e8ea;border-right:1px solid #cfd3d6;"></div>
<div class="a t" style="left:1029px;top:357.5px;font-family:'Liberation Sans',sans-serif;font-size:12.4px;color:#111;font-weight:bold;transform:scale(1,0.91);transform-origin:0 10.50px;">Viewer</div>
<svg class="a" style="left:1315px;top:360px" width="32" height="12" viewBox="0 0 32 12"><rect x="0" y="6" width="14" height="6" rx="1" fill="#7f8b92"/><rect x="1" y="8.7" width="12" height="2.3" fill="#e6e8ea"/><rect x="18" y="0" width="14" height="12" rx="1" fill="#7f8b92"/><rect x="19" y="2.7" width="12" height="8.3" fill="#e6e8ea"/></svg>
<div class="a" style="left:794px;top:376px;width:562px;height:22px;background:#f5f7f8;border-bottom:1px solid #d3d7da;"></div>
<svg class="a" style="left:802px;top:380px" width="16" height="13" viewBox="0 0 16 13"><path d="M1 6.5L7.5 0.5v3.5h7.5v5H7.5v3.5z" fill="#8cc1ec" stroke="#6ea9da" stroke-width="0.7"/></svg>
<svg class="a" style="left:830px;top:380px" width="16" height="13" viewBox="0 0 16 13"><path d="M15 6.5L8.5 0.5v3.5H1v5h7.5v3.5z" fill="#dde9f4" stroke="#d0dde8" stroke-width="0.7"/></svg>
<div class="a" style="left:854px;top:381px;width:1px;height:13px;background:#d0d4d7;"></div>
<svg class="a" style="left:862px;top:378px" width="17" height="17" viewBox="0 0 17 17"><circle cx="11" cy="6" r="5" fill="#d4ecf7" stroke="#4c7fa8" stroke-width="1.2"/><path d="M11 3.3v5.4M8.3 6h5.4" stroke="#1aa05a" stroke-width="1.8"/><path d="M7.5 9.5L1.8 15.2" stroke="#b0702a" stroke-width="2.6" stroke-linecap="round"/></svg>
<div class="a t" style="left:884px;top:381.5px;font-family:'Liberation Sans',sans-serif;font-size:12.4px;color:#222;font-weight:normal;transform:scale(1,0.91);transform-origin:0 10.50px;">Zoom</div>
<div class="a" style="left:925px;top:381px;width:1px;height:13px;background:#d0d4d7;"></div>
<svg class="a" style="left:932px;top:380px" width="18" height="14" viewBox="0 0 18 14"><path d="M0.5 7h3" stroke="#777" stroke-width="1"/><rect x="4.5" y="1.5" width="13" height="12" fill="#fff" stroke="#9aa2a8"/><rect x="5.5" y="2.5" width="11" height="6" fill="#6ab4e8"/><path d="M5.5 13V9c3-2 6-2 11 0v4z" fill="#e8c35a"/><circle cx="13.5" cy="5" r="1.5" fill="#fff6b0"/></svg>
<div class="a t" style="left:953px;top:381.5px;font-family:'Liberation Sans',sans-serif;font-size:12.4px;color:#222;font-weight:normal;transform:scale(1,0.91);transform-origin:0 10.50px;">Export</div>
<svg class="a" style="left:994px;top:387px" width="6" height="4" viewBox="0 0 6 4"><path d="M0 0h6L3 3.5z" fill="#222"/></svg>
<div class="a" style="left:1007px;top:381px;width:1px;height:13px;background:#d0d4d7;"></div>
<svg class="a" style="left:1015px;top:379px" width="18" height="16" viewBox="0 0 18 16"><rect x="6.5" y="2.5" width="10" height="12" fill="#fff" stroke="#dfe3e6" stroke-width="0.9"/><circle cx="6.2" cy="6.3" r="5.2" fill="#c9302c"/><circle cx="6.2" cy="6.3" r="4.6" fill="none" stroke="#e25c58" stroke-width="0.6"/><path d="M4 4.1l4.4 4.4M8.4 4.1L4 8.5" stroke="#fff" stroke-width="1.7"/></svg>
<div class="a" style="left:1041px;top:381px;width:1px;height:13px;background:#d0d4d7;"></div>
<svg class="a" style="left:1046px;top:374.5px" width="30" height="24" viewBox="0 0 30 24"><ellipse cx="13" cy="17.6" rx="6" ry="1.3" fill="#8e979f" opacity="0.55"/><path d="M15.8 7.6L19.3 3.9" stroke="#d9534f" stroke-width="2.6" stroke-linecap="round"/><g transform="translate(15.2,8.3) rotate(42)"><path d="M-2.6 0Q0 -1.6 2.6 0L5.2 9.3Q0 11.2 -5.2 9.3Z" fill="#e4c56c"/><path d="M-3.2 2.3H3.2M-3.7 4.4H3.7" stroke="#b98332" stroke-width="1.1"/></g></svg>
<svg class="a" style="left:1239px;top:380px" width="18" height="14" viewBox="0 0 18 14"><path d="M2.5 7a6.5 6.5 0 0 1 12.5-2.5" fill="none" stroke="#1e88d8" stroke-width="2"/><path d="M15.5 7a6.5 6.5 0 0 1-12.5 2.5" fill="none" stroke="#1e88d8" stroke-width="2"/><circle cx="9" cy="7" r="2.6" fill="#1e88d8"/><path d="M0 6.5h4M14 7.5h4" stroke="#1e88d8" stroke-width="1.6"/></svg>
<div class="a t" style="left:1261px;top:381.5px;font-family:'Liberation Sans',sans-serif;font-size:12.4px;color:#222;font-weight:normal;transform:scale(1,0.91);transform-origin:0 10.50px;">Publish</div>
<svg class="a" style="left:1312px;top:387px" width="6" height="4" viewBox="0 0 6 4"><path d="M0 0h6L3 3.5z" fill="#222"/></svg>
<div class="a" style="left:1326px;top:381px;width:1px;height:13px;background:#d0d4d7;"></div>
<svg class="a" style="left:1334.5px;top:377px" width="17" height="17" viewBox="0 0 17 17"><path d="M13.6 10.2A6 6 0 1 1 10.8 3.2" fill="none" stroke="#c3d0de" stroke-width="3.6"/><path d="M13.6 10.2A6 6 0 1 1 10.8 3.2" fill="none" stroke="#edf2f8" stroke-width="1.8"/><path d="M8.6 0.8L15.6 1.2L14.6 7.8Z" fill="#edf2f8" stroke="#c3d0de" stroke-width="0.9" stroke-linejoin="round"/></svg>
<div class="a" style="left:794px;top:398px;width:562px;height:400px;background:#ffffff;"></div>
<svg class="a" style="left:0;top:0" width="1365" height="806" viewBox="0 0 1365 806"><rect x="851" y="405" width="431" height="346.5" fill="#ebebeb"/><line x1="851" x2="1282" y1="697.5" y2="697.5" stroke="#fff" stroke-width="0.55"/><line x1="851" x2="1282" y1="618.5" y2="618.5" stroke="#fff" stroke-width="0.55"/><line x1="851" x2="1282" y1="539.5" y2="539.5" stroke="#fff" stroke-width="0.55"/><line x1="851" x2="1282" y1="460.5" y2="460.5" stroke="#fff" stroke-width="0.55"/><line x1="851" x2="1282" y1="737" y2="737" stroke="#fff" stroke-width="1.1"/><line x1="851" x2="1282" y1="658.0" y2="658.0" stroke="#fff" stroke-width="1.1"/><line x1="851" x2="1282" y1="579.0" y2="579.0" stroke="#fff" stroke-width="1.1"/><line x1="851" x2="1282" y1="500.0" y2="500.0" stroke="#fff" stroke-width="1.1"/><line x1="851" x2="1282" y1="421.0" y2="421.0" stroke="#fff" stroke-width="1.1"/><line x1="931.5" x2="931.5" y1="405" y2="751.5" stroke="#fff" stroke-width="1.1"/><line x1="1066.5" x2="1066.5" y1="405" y2="751.5" stroke="#fff" stroke-width="1.1"/><line x1="1201.5" x2="1201.5" y1="405" y2="751.5" stroke="#fff" stroke-width="1.1"/><rect x="871.0" y="421" width="121" height="26" fill="#F8766D" shape-rendering="crispEdges"/><rect x="871.0" y="447" width="121" height="263" fill="#00BA38" shape-rendering="crispEdges"/><rect x="871.0" y="710" width="121" height="27" fill="#619CFF" shape-rendering="crispEdges"/><rect x="1006.0" y="421" width="121" height="140" fill="#F8766D" shape-rendering="crispEdges"/><rect x="1006.0" y="561" width="121" height="106" fill="#00BA38" shape-rendering="crispEdges"/><rect x="1006.0" y="667" width="121" height="70" fill="#619CFF" shape-rendering="crispEdges"/><rect x="1141.0" y="421" width="121" height="75" fill="#F8766D" shape-rendering="crispEdges"/><rect x="1141.0" y="496" width="121" height="105" fill="#00BA38" shape-rendering="crispEdges"/><rect x="1141.0" y="601" width="121" height="136" fill="#619CFF" shape-rendering="crispEdges"/><line x1="847.3" x2="851" y1="737" y2="737" stroke="#333" stroke-width="1.1"/><line x1="847.3" x2="851" y1="658.0" y2="658.0" stroke="#333" stroke-width="1.1"/><line x1="847.3" x2="851" y1="579.0" y2="579.0" stroke="#333" stroke-width="1.1"/><line x1="847.3" x2="851" y1="500.0" y2="500.0" stroke="#333" stroke-width="1.1"/><line x1="847.3" x2="851" y1="421.0" y2="421.0" stroke="#333" stroke-width="1.1"/><line x1="931.5" x2="931.5" y1="751.5" y2="755.2" stroke="#333" stroke-width="1.1"/><line x1="1066.5" x2="1066.5" y1="751.5" y2="755.2" stroke="#333" stroke-width="1.1"/><line x1="1201.5" x2="1201.5" y1="751.5" y2="755.2" stroke="#333" stroke-width="1.1"/></svg>
<div class="a t" style="left:780px;top:731.59px;font-family:'Liberation Sans',sans-serif;font-size:12.3px;color:#4d4d4d;font-weight:normal;width:63.5px;text-align:right;">0.00</div>
<div class="a t" style="left:780px;top:652.59px;font-family:'Liberation Sans',sans-serif;font-size:12.3px;color:#4d4d4d;font-weight:normal;width:63.5px;text-align:right;">0.25</div>
<div class="a t" style="left:780px;top:573.59px;font-family:'Liberation Sans',sans-serif;font-size:12.3px;color:#4d4d4d;font-weight:normal;width:63.5px;text-align:right;">0.50</div>
<div class="a t" style="left:780px;top:494.59px;font-family:'Liberation Sans',sans-serif;font-size:12.3px;color:#4d4d4d;font-weight:normal;width:63.5px;text-align:right;">0.75</div>
<div class="a t" style="left:780px;top:415.59px;font-family:'Liberation Sans',sans-serif;font-size:12.3px;color:#4d4d4d;font-weight:normal;width:63.5px;text-align:right;">1.00</div>
<div class="a t" style="left:911.5px;top:757.59px;font-family:'Liberation Sans',sans-serif;font-size:12.3px;color:#4d4d4d;font-weight:normal;width:40px;text-align:center;">x</div>
<div class="a t" style="left:1046.5px;top:757.59px;font-family:'Liberation Sans',sans-serif;font-size:12.3px;color:#4d4d4d;font-weight:normal;width:40px;text-align:center;">y</div>
<div class="a t" style="left:1181.5px;top:757.59px;font-family:'Liberation Sans',sans-serif;font-size:12.3px;color:#4d4d4d;font-weight:normal;width:40px;text-align:center;">z</div>
<div class="a t" style="left:1016px;top:773.55px;font-family:'Liberation Sans',sans-serif;font-size:15.3px;color:#1a1a1a;font-weight:normal;width:100px;text-align:center;">variable</div>
<div class="a t" style="left:758.5px;top:570.75px;font-family:'Liberation Sans',sans-serif;font-size:15.6px;color:#1a1a1a;font-weight:normal;width:100px;text-align:center;transform:translate(-0px,0) rotate(-90deg);transform-origin:50% 50%;">value</div>
<div class="a t" style="left:1303px;top:533.05px;font-family:'Liberation Sans',sans-serif;font-size:15.3px;color:#1a1a1a;font-weight:normal;">id</div>
<div class="a" style="left:1305px;top:555.7px;width:21px;height:21.5px;background:#F8766D;"></div>
<div class="a t" style="left:1334px;top:561.79px;font-family:'Liberation Sans',sans-serif;font-size:12.3px;color:#1a1a1a;font-weight:normal;">a</div>
<div class="a" style="left:1305px;top:579.1px;width:21px;height:21.5px;background:#00BA38;"></div>
<div class="a t" style="left:1334px;top:585.19px;font-family:'Liberation Sans',sans-serif;font-size:12.3px;color:#1a1a1a;font-weight:normal;">b</div>
<div class="a" style="left:1305px;top:602.5px;width:21px;height:21.5px;background:#619CFF;"></div>
<div class="a t" style="left:1334px;top:608.59px;font-family:'Liberation Sans',sans-serif;font-size:12.3px;color:#1a1a1a;font-weight:normal;">c</div>
</body></html>
